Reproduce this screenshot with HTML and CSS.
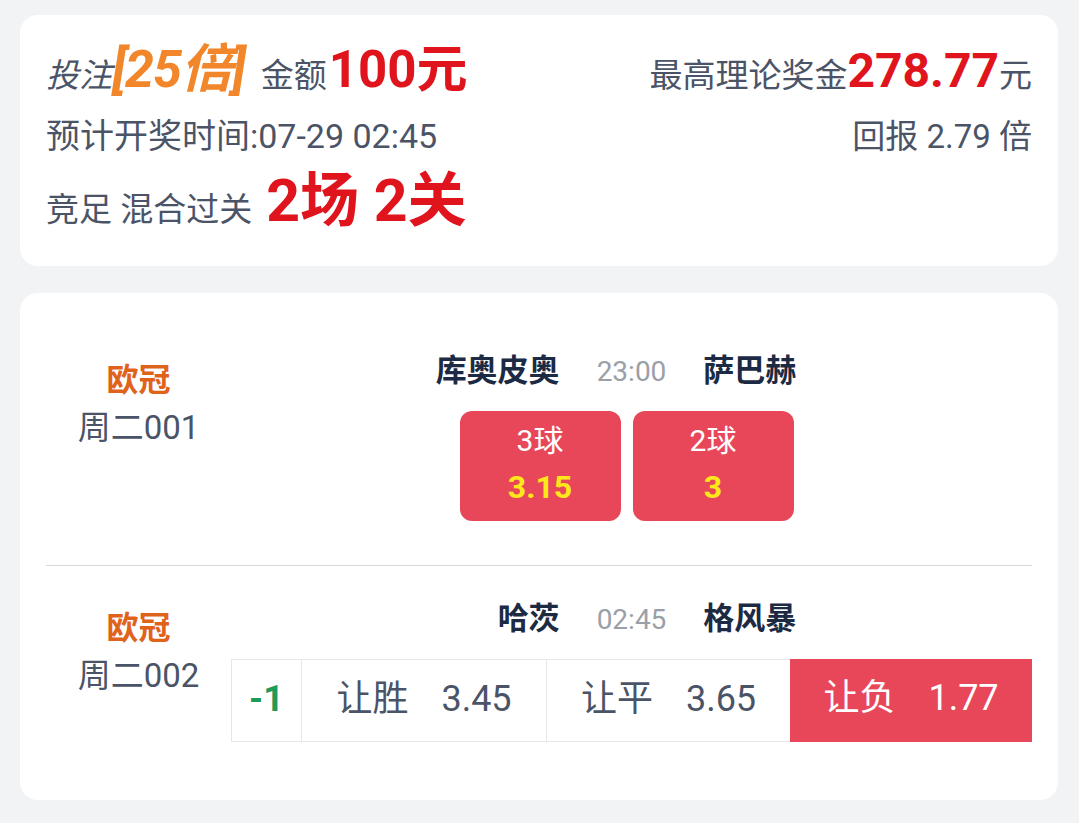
FILE: index.html
```html
<!DOCTYPE html>
<html lang="zh-CN">
<head>
<meta charset="UTF-8" />
<meta name="viewport" content="width=device-width, initial-scale=1" />
<title>投注详情</title>
<link rel="stylesheet" href="styles.css">
</head>
<body>
<div class="page">
  <section class="card summary">
    <div class="row row-top">
      <div class="left">
        <span class="label italic">投注</span><span class="times">[25倍]</span><span class="label gap">金额</span><span class="amount">100元</span>
      </div>
      <div class="right">
        <span class="label">最高理论奖金</span><span class="prize">278.77</span><span class="label">元</span>
      </div>
    </div>
    <div class="row">
      <div class="left label">预计开奖时间:07-29 02:45</div>
      <div class="right label">回报 2.79 倍</div>
    </div>
    <div class="row row-pass">
      <div class="left">
        <span class="label">竞足 混合过关</span><span class="pass">2场 2关</span>
      </div>
    </div>
  </section>

  <section class="card matches">
    <div class="match first">
      <div class="league">
        <div class="league-name">欧冠</div>
        <div class="league-no">周二001</div>
      </div>
      <div class="detail">
        <div class="teams">
          <span class="home">库奥皮奥</span>
          <span class="time">23:00</span>
          <span class="away">萨巴赫</span>
        </div>
        <div class="picks">
          <div class="pick">
            <div class="pick-name">3球</div>
            <div class="pick-odds">3.15</div>
          </div>
          <div class="pick">
            <div class="pick-name">2球</div>
            <div class="pick-odds">3</div>
          </div>
        </div>
      </div>
    </div>

    <div class="match last">
      <div class="league">
        <div class="league-name">欧冠</div>
        <div class="league-no">周二002</div>
      </div>
      <div class="detail">
        <div class="teams">
          <span class="home">哈茨</span>
          <span class="time">02:45</span>
          <span class="away">格风暴</span>
        </div>
        <div class="odds-table">
          <div class="cell handicap">-1</div>
          <div class="cell"><span>让胜</span><span class="odd">3.45</span></div>
          <div class="cell"><span>让平</span><span class="odd">3.65</span></div>
          <div class="cell selected"><span>让负</span><span class="odd">1.77</span></div>
        </div>
      </div>
    </div>
  </section>
</div>
</body>
</html>
```

FILE: styles.css
```css
body, html {
  margin: 0; padding: 0;
  background: #f2f3f5; color: #4b5467;
  font-family: Roboto, "Noto Sans CJK SC", sans-serif;
}
.page {
  padding: 15px 21px 20px 20px;
}
.card {
  background: #fff; border-radius: 18px;
  padding: 0 26px;
}

/* summary card */
.summary {
  padding-top: 22px; padding-bottom: 33px;
}
.row {
  display: flex; justify-content: space-between; align-items: baseline;
  height: 66px; line-height: 66px;
}
.row-pass {
  height: 64px; line-height: 64px;
}
.label {
  font-size: 33px; color: #4b5467;
}
.row .left.label {
  font-size: 34px;
}
.italic {
  font-style: italic;
}
.gap {
  margin-left: 16px;
}
.times {
  font-size: 52px; font-weight: bold; font-style: italic; color: #f2862a;
  letter-spacing: -1px;
}
.amount {
  font-size: 51px; font-weight: bold; color: #e0141c; margin-left: 2px;
}
.prize {
  font-size: 48px; font-weight: bold; color: #e0141c;
}
.pass {
  font-size: 59px; font-weight: bold; color: #e0141c; margin-left: 14px;
}

/* matches card */
.matches {
  margin-top: 27px;
}
.match {
  display: grid; grid-template-columns: 185px 1fr;
}
.match.first {
  padding: 58px 0 44px; border-bottom: 1px solid #d6d8dc;
}
.match.last {
  padding: 33px 0 58px;
}
.league {
  text-align: center; padding-top: 9px;
}
.league-name {
  font-size: 32px; line-height: 40px; font-weight: bold; color: #e0631c;
}
.league-no {
  font-size: 33px; line-height: 40px; margin-top: 8px; color: #4b5467;
}
.teams {
  display: grid; grid-template-columns: 1fr auto 1fr; column-gap: 37px;
  height: 40px; line-height: 40px; align-items: baseline;
}
.home, .away {
  font-size: 31px; font-weight: bold; color: #1c2a43;
}
.home {
  text-align: right;
}
.time {
  font-size: 28px; color: #9aa0a8;
}
.picks {
  display: flex; justify-content: center; gap: 12px;
  margin-top: 20px; padding-right: 10px;
}
.pick {
  width: 161px; height: 110px; border-radius: 12px;
  background: #e8475a; text-align: center;
  padding-top: 10px; box-sizing: border-box;
}
.pick-name {
  font-size: 30px; line-height: 40px; color: #fff;
}
.pick-odds {
  font-size: 32px; line-height: 40px; margin-top: 6px;
  font-weight: bold; color: #ffe81a;
}
.odds-table {
  display: grid; grid-template-columns: 69px 245px 244px 1fr;
  margin-top: 20px; height: 83px;
  border: 1px solid #e6e7ea; box-sizing: border-box;
}
.cell {
  text-align: center; line-height: 78px;
  font-size: 36px; color: #4b5467;
  border-left: 1px solid #e6e7ea;
}
.cell .odd {
  margin-left: 33px;
}
.cell.handicap {
  border-left: none; font-weight: bold; color: #1f9a5a;
}
.cell.selected {
  background: #e8475a; color: #fff; border-left: none;
  margin: -1px -1px -1px 0;
}
```
